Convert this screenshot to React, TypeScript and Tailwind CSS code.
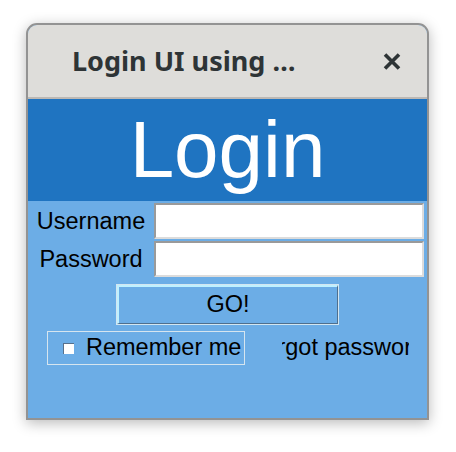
import React from "react";

export default function App() {
  const sans = { fontFamily: '"Liberation Sans", Arial, sans-serif' };
  return (
    <div className="w-[456px] h-[452px] bg-white pt-[23px] pl-[26px]">
      <div className="w-[403px] h-[397px] border-2 border-[#939393] rounded-t-[11px] overflow-hidden flex flex-col shadow-[0_3px_14px_rgba(0,0,0,0.28)] bg-[#6cade6]">
        {/* Title bar */}
        <div className="h-[74px] shrink-0 bg-[#deddda] border-b-2 border-[#bcb8b4] flex items-center justify-between pl-[44px] pr-[26px]">
          <span
            className="text-[27px] font-bold text-[#2e3436] whitespace-nowrap"
            style={{ fontFamily: '"Noto Sans", "Open Sans", sans-serif' }}
          >
            Login UI using …
          </span>
          <svg width="18" height="17" viewBox="0 0 18 17" className="mt-[1px]">
            <path d="M2 1.5 L16 15.5 M16 1.5 L2 15.5" stroke="#2e3436" strokeWidth="3.6" strokeLinecap="butt" />
          </svg>
        </div>

        {/* Header */}
        <div
          className="h-[102px] shrink-0 bg-[#1f74c1] flex justify-center pt-[5px] text-white text-[80px] leading-[92px]"
          style={sans}
        >
          Login
        </div>

        {/* Form */}
        <div className="flex-1 bg-[#6cade6] flex flex-col text-[23.5px] text-black" style={sans}>
          <div className="grid grid-cols-[126px_270px] gap-y-[2px] pt-[2px]">
            <div className="h-[36px] flex items-center justify-center leading-none pt-[1px]">Username</div>
            <div className="h-[36px] bg-white border-2 border-t-[#9a9a9a] border-l-[#9a9a9a] border-b-[#dcdcdc] border-r-[#dcdcdc]" />
            <div className="h-[36px] flex items-center justify-center leading-none pt-[1px]">Password</div>
            <div className="h-[36px] bg-white border-2 border-t-[#9a9a9a] border-l-[#9a9a9a] border-b-[#dcdcdc] border-r-[#dcdcdc]" />
          </div>

          <div className="mt-[7px] ml-[88px] w-[223px] h-[41px] border border-[#d3e6f1]">
            <div className="w-full h-full border-t-2 border-l-2 border-t-[#bff0ff] border-l-[#bff0ff] border-b border-r border-b-[#4f6f8d] border-r-[#4f6f8d] flex items-center justify-center leading-none">
              GO!
            </div>
          </div>

          <div className="mt-[6px] flex items-center">
            <div className="ml-[19px] w-[198px] h-[34px] border border-[#d6e5ef] flex items-center overflow-hidden">
              <div className="ml-[15px] w-[11px] h-[11px] bg-white border-t border-l border-[#56708c] shrink-0" />
              <span className="ml-[12px] whitespace-nowrap leading-none">Remember me</span>
            </div>
            <div className="ml-[37px] w-[127px] h-[34px] overflow-hidden flex items-center">
              <span className="ml-[-32px] whitespace-nowrap leading-none">Forgot password</span>
            </div>
          </div>
        </div>
      </div>
    </div>
  );
}
